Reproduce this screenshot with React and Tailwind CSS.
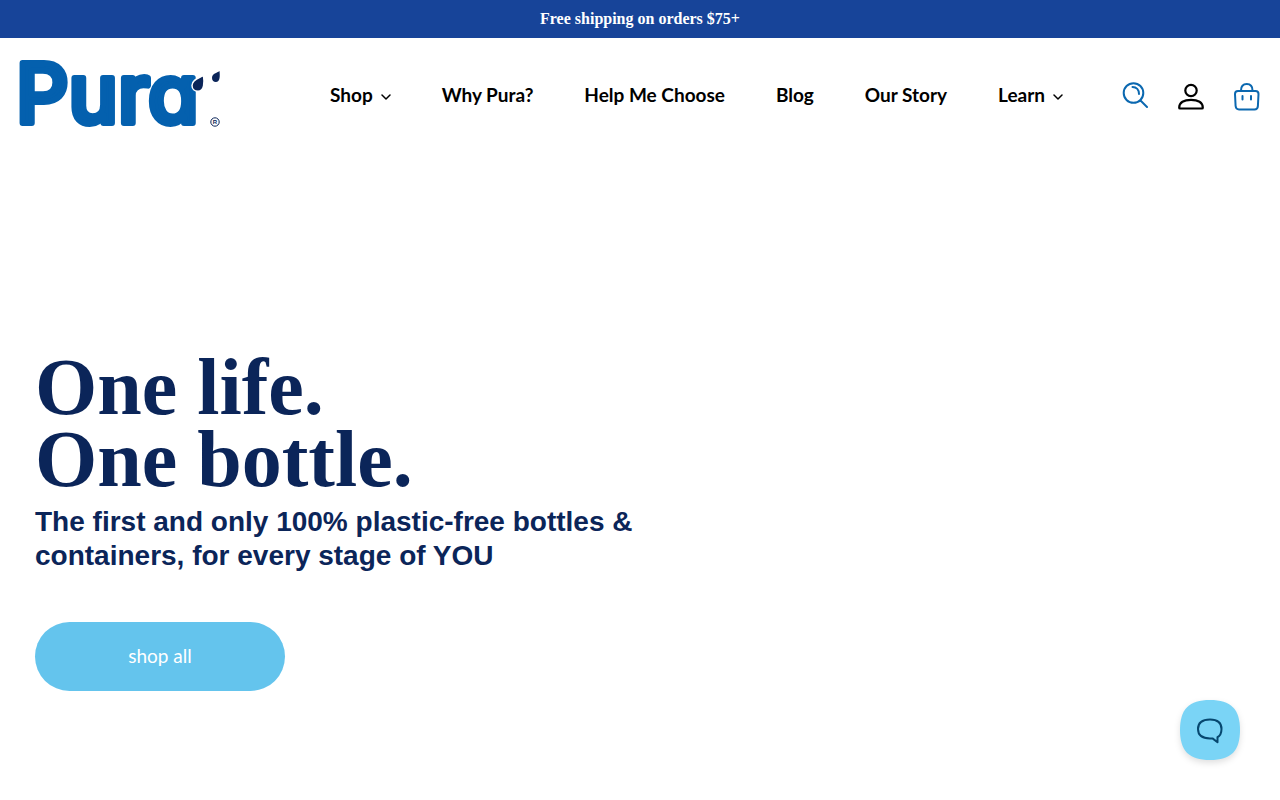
import React from 'react';

const navLinks = [
  { label: 'Shop', href: '#shop', hasMenu: true },
  { label: 'Why Pura?', href: '#why' },
  { label: 'Help Me Choose', href: '#help' },
  { label: 'Blog', href: '#blog' },
  { label: 'Our Story', href: '#story' },
  { label: 'Learn', href: '#learn', hasMenu: true },
];

function Logo() {
  return (
    <svg width="200" height="64" viewBox="0 0 200 64" className="block overflow-visible">
      <text
        x="-4"
        y="60"
        fontSize="82"
        fontWeight="500"
        fill="#0460ae"
        stroke="#0460ae"
        strokeWidth="6"
        strokeLinejoin="round"
        className="font-['Inter',sans-serif] [font-feature-settings:'cv11']"
      >
        Pura
      </text>
      {/* Water drops */}
      <path
        d="M183.500 12.500C180 15 172 16 172 22.500C172 26 174.700 28.200 178 28.200C184.500 28.200 184.500 19 183.500 12.500Z"
        fill="#0b2559"
        stroke="#fff"
        strokeWidth="1.500"
      />
      <path
        d="M199.500 8C197 10 192 10.500 192 15C192 17.400 193.700 19 195.800 19C200.300 19 200 12.500 199.500 8Z"
        fill="#0b2559"
      />
      <circle cx="195" cy="59" r="4.200" fill="none" stroke="#0b2559" strokeWidth="1" />
      <text x="195" y="61" fontSize="6" fontWeight="700" fill="#0b2559" textAnchor="middle" className="font-['Liberation_Sans',sans-serif]">
        R
      </text>
    </svg>
  );
}

function ChevronIcon() {
  return (
    <svg width="10" height="6" viewBox="0 0 10 6" fill="none" stroke="currentColor" strokeWidth="1.500" strokeLinecap="round" strokeLinejoin="round" className="mt-1">
      <path d="M1 1l4 4 4-4" />
    </svg>
  );
}

function SearchIcon() {
  return (
    <svg width="26" height="32" viewBox="0 0 26 32" fill="none" stroke="#0b68b0" strokeWidth="2" strokeLinecap="round">
      <circle cx="11.500" cy="14" r="9.800" />
      <path d="M18.500 21.500L25 28" />
      <path d="M10.500 8c4 0 6.500 3 6.500 7" />
    </svg>
  );
}

function AccountIcon() {
  return (
    <svg width="26" height="32" viewBox="0 0 26 32" fill="none" stroke="#000" strokeWidth="2.200" strokeLinejoin="round">
      <circle cx="13" cy="11.500" r="5.700" />
      <path d="M1.200 28.700C1.200 23.500 6 20.800 13 20.800S24.800 23.500 24.800 28.700Q24.800 29.500 24 29.500H2Q1.200 29.500 1.200 28.700Z" />
    </svg>
  );
}

function CartIcon() {
  return (
    <svg width="26" height="32" viewBox="0 0 26 32" fill="none" stroke="#0b68b0" strokeWidth="2" strokeLinecap="round" strokeLinejoin="round">
      <path d="M4 12H21.500Q24.500 12 24.500 15L23.900 27Q23.700 30.500 20.500 30.500H5Q2 30.500 1.600 27L1 15Q1 12 4 12Z" />
      <path d="M7 11.500C7 7.500 9.300 5 12.800 5S18.500 7.500 18.500 11.500" />
      <path d="M8.500 17v3.500M17 17v3.500" />
    </svg>
  );
}

function ChatIcon() {
  return (
    <svg width="60" height="60" viewBox="0 0 60 60" className="block drop-shadow-md">
      <path d="M30 0C51 0 60 9 60 30S51 60 30 60S0 51 0 30S9 0 30 0Z" fill="#7ad4f6" />
      <path
        d="M30 19.500C38 19.500 41.500 22.500 41.500 29C41.500 33 40.500 35.500 37.500 37.200V42.200L32.500 38.400H30C21.500 38.400 18 35.500 18 29C18 22.500 21.500 19.500 30 19.500Z"
        fill="none"
        stroke="#06476f"
        strokeWidth="2"
        strokeLinejoin="round"
      />
    </svg>
  );
}

function App() {
  return (
    <div className="min-h-screen bg-white">
      <div className="bg-[#174499] py-2 text-center font-['Liberation_Serif',serif] text-base leading-[22px] font-bold text-white">
        Free shipping on orders $75+
      </div>

      <header className="flex items-center px-5 pt-[25px] pb-6">
        <a href="#home" aria-label="Pura">
          <Logo />
        </a>
        <nav className="mr-[59px] ml-[110px] flex flex-1 items-center justify-between font-['Lato',sans-serif] text-[19px] leading-7 font-bold text-black">
          {navLinks.map((link) => (
            <a key={link.label} href={link.href} className="flex items-center gap-2 whitespace-nowrap">
              {link.label}
              {link.hasMenu && <ChevronIcon />}
            </a>
          ))}
        </nav>
        <div className="flex items-center gap-[30px]">
          <button type="button" aria-label="Search">
            <SearchIcon />
          </button>
          <a href="#account" aria-label="Account">
            <AccountIcon />
          </a>
          <a href="#cart" aria-label="Cart">
            <CartIcon />
          </a>
        </div>
      </header>

      {/* Hero */}
      <main className="px-[35px] pt-50">
        <div className="max-w-[620px] text-[#0b2559]">
          <h1 className="font-['Liberation_Serif',serif] text-[80px] leading-[72px] font-bold">
            One life.
            <br />
            One bottle.
          </h1>
          <h2 className="mt-2.5 font-['Liberation_Sans',sans-serif] text-[28px] leading-[34px] font-bold">
            The first and only 100% plastic-free bottles & containers, for every stage of YOU
          </h2>
        </div>
        <a
          href="#shop-all"
          className="mt-[49px] inline-flex h-[69px] w-[250px] items-center justify-center rounded-full bg-[#64c4ed] font-['Lato',sans-serif] text-[19px] text-white"
        >
          shop all
        </a>
      </main>

      <button type="button" aria-label="Open chat" className="fixed right-10 bottom-10">
        <ChatIcon />
      </button>
    </div>
  );
}

export default App;
